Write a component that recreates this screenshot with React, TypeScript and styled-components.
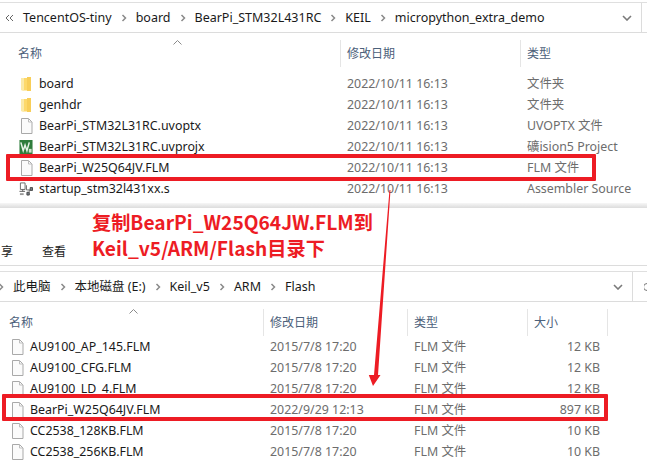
import React from 'react';
import styled, {createGlobalStyle} from 'styled-components';

const GlobalStyle = createGlobalStyle`
  html, body {
    margin: 0;
    padding: 0;
    background: #fff;
  }
`;

const Page = styled.div`
  position: relative;
  width: 647px;
  height: 463px;
  overflow: hidden;
  background: #fff;
  color: #1a1a1a;
  font-family: "Noto Sans", "Noto Sans CJK SC", sans-serif;
  font-size: 12px;
  line-height: 16px;
`;

const TopWindow = styled.section`
  height: 203px;
  padding-top: 2px;
  box-sizing: border-box;
`;

const WindowGap = styled.div`
  height: 5px;
  background: linear-gradient(#f7f7f7, #dcdcdc);
`;

const BottomWindow = styled.section`
  height: 255px;
`;

const AddressBar = styled.div`
  display: flex;
  align-items: center;
  height: 29px;
  border-top: 1px solid #dfdfdf;
  border-bottom: 1px solid #dcdcdc;
  white-space: nowrap;
`;

const Crumbs = styled.div<{$left: number}>`
  flex: 1;
  display: flex;
  align-items: center;
  gap: 9px;
  margin-left: ${p => p.$left}px;
  overflow: hidden;
`;

const Crumb = styled.span`
  font-size: 12.5px;
`;

const DropBox = styled.div`
  display: flex;
  align-items: center;
  justify-content: center;
  align-self: stretch;
  width: 29px;
  border-right: 1px solid #dcdcdc;
`;

const RefreshSlot = styled.div<{$width: number}>`
  display: flex;
  justify-content: flex-end;
  width: ${p => p.$width}px;
  overflow: hidden;
`;

const HeaderRow = styled.div<{$cols: string}>`
  position: relative;
  display: grid;
  grid-template-columns: ${p => p.$cols};
  height: 34px;
  align-items: end;
`;

const HeaderCell = styled.div<{$pad?: number; $line?: boolean}>`
  height: 27px;
  padding-left: ${p => p.$pad ?? 6}px;
  border-left: ${p => (p.$line ? '1px solid #e5e5e5' : 'none')};
  color: #4c607a;
  font-size: 12px;
  line-height: 27px;
  box-sizing: border-box;
`;

const SortCaret = styled.svg<{$x: number}>`
  position: absolute;
  left: ${p => p.$x}px;
  top: 7px;
`;

const FileList = styled.div<{$pad: number}>`
  padding-top: ${p => p.$pad}px;
`;

const Row = styled.div<{$cols: string}>`
  display: grid;
  grid-template-columns: ${p => p.$cols};
  height: 21px;
  align-items: center;
  white-space: nowrap;
`;

const NameCell = styled.div<{$pad: number}>`
  display: flex;
  align-items: center;
  gap: 6px;
  padding-left: ${p => p.$pad}px;
`;

const IconBox = styled.span`
  display: flex;
  width: 13px;
  height: 16px;
  flex: none;
`;

const FileName = styled.span`
  font-size: 12.4px;
`;

const InfoCell = styled.div<{$right?: boolean}>`
  color: #6d6d6d;
  font-size: 12.4px;
  text-align: ${p => (p.$right ? 'right' : 'left')};
  padding-left: ${p => (p.$right ? 0 : 7)}px;
  padding-right: ${p => (p.$right ? 7 : 0)}px;
`;

const Ribbon = styled.div`
  height: 57px;
  border-bottom: 1px solid #dcdcdc;
  display: flex;
  flex-direction: column;
`;

const RibbonHead = styled.div`
  height: 24px;
  padding-top: 8px;
  margin-left: -8px;
  font-size: 12px;
`;

const RibbonTabs = styled.div`
  display: flex;
  gap: 29px;
  margin-top: 4px;
  margin-left: 1px;
  font-size: 12px;
`;

const RibbonGap = styled.div`
  height: 5px;
`;

const Annotation = styled.div`
  position: absolute;
  left: 92px;
  top: 209px;
  color: #ed1c24;
  font-family: "Noto Sans CJK SC", "Noto Sans", sans-serif;
  font-size: 19.2px;
  font-weight: 700;
  line-height: 26px;
  white-space: nowrap;
`;

const Highlight = styled.div<{$x: number; $y: number; $w: number; $h: number}>`
  position: absolute;
  left: ${p => p.$x}px;
  top: ${p => p.$y}px;
  width: ${p => p.$w}px;
  height: ${p => p.$h}px;
  border: 4px solid #ed1c24;
  border-radius: 1px;
  box-sizing: border-box;
`;

const ArrowLayer = styled.svg`
  position: absolute;
  left: 0;
  top: 0;
  pointer-events: none;
`;

const FileIcon = () => (
  <svg width="13" height="16" viewBox="0 0 13 16">
    <path d="M1.500.5h7l3.500 3.500v11.500H1.500z" fill="#fbfbfb" stroke="#a9a9a9" />
    <path d="M8.500.5v3.500H12" fill="none" stroke="#bdbdbd" />
  </svg>
);

const FolderIcon = () => (
  <svg width="13" height="16" viewBox="0 0 13 16">
    <path d="M1 2h9v12.500H3L1 14z" fill="#fdd96b" />
    <path d="M1 2h3v12.500L1 14z" fill="#fbeaa8" />
    <path d="M7 1h4v14H7z" fill="#f8ce58" />
  </svg>
);

const ProjectIcon = () => (
  <svg width="15" height="16" viewBox="0 0 15 16" style={{marginLeft: -1}}>
    <rect x="0.5" y="0.5" width="14" height="15" fill="#2f7d3c" />
    <path d="M2 3l2.500 9L6.500 6l2 6L11 3" fill="none" stroke="#e8f3e8" strokeWidth="1.600" />
    <path d="M10.500 10h3v4h-3z" fill="#cfe6cf" />
  </svg>
);

const SourceIcon = () => (
  <svg width="15" height="16" viewBox="0 0 15 16" style={{marginLeft: -1}}>
    <path d="M1.500 1.500h5v7h-5z" fill="#fff" stroke="#666" />
    <path d="M.5 10.500h6M4 8.500v2" fill="none" stroke="#555" />
    <path d="M8 4v5M8 9h5M11 9v2" fill="none" stroke="#666" />
    <path d="M8.500 11.500h2.500v3h-2.500zM12 6.500h2.500v3H12z" fill="#77808a" stroke="#444" />
    <path d="M1 12.500h4v2H1z" fill="#999" />
  </svg>
);

const Chevron = () => (
  <svg width="6" height="8" viewBox="0 0 6 8">
    <path d="M1.500 1l3 3-3 3" fill="none" stroke="#8a8a8a" strokeWidth="1.500" />
  </svg>
);

const DoubleChevron = () => (
  <svg width="9" height="8" viewBox="0 0 9 8">
    <path d="M4 1L1 4l3 3M8 1L5 4l3 3" fill="none" stroke="#666" />
  </svg>
);

const DropChevron = () => (
  <svg width="10" height="6" viewBox="0 0 10 6">
    <path d="M1 1l4 4 4-4" fill="none" stroke="#7a7a7a" strokeWidth="1.600" />
  </svg>
);

// only the left edge of the refresh arrow is inside the frame
const RefreshEdge = () => (
  <svg width="3" height="10" viewBox="0 0 3 10">
    <path d="M3 1.500a3.500 3.500 0 0 0 0 7" fill="none" stroke="#777" />
  </svg>
);

const Caret = ({x}: {x: number}) => (
  <SortCaret $x={x} width="9" height="5" viewBox="0 0 9 5">
    <path d="M.5 4.500l4-4 4 4" fill="none" stroke="#8a8a8a" />
  </SortCaret>
);

type IconKind = 'file' | 'folder' | 'project' | 'source';

const icons: {[key in IconKind]: React.FC} = {
  file: FileIcon,
  folder: FolderIcon,
  project: ProjectIcon,
  source: SourceIcon,
};

const TOP_COLS = '340px 180px 127px';
const BOTTOM_COLS = '263px 144px 120px 80px 40px';
const TOP_TIME = '2022/10/11 16:13';
const OLD_TIME = '2015/7/8 17:20';

const topRows: {name: string; icon: IconKind; kind: string}[] = [
  {name: 'board', icon: 'folder', kind: '文件夹'},
  {name: 'genhdr', icon: 'folder', kind: '文件夹'},
  {name: 'BearPi_STM32L31RC.uvoptx', icon: 'file', kind: 'UVOPTX 文件'},
  {name: 'BearPi_STM32L31RC.uvprojx', icon: 'project', kind: '礦ision5 Project'},
  {name: 'BearPi_W25Q64JV.FLM', icon: 'file', kind: 'FLM 文件'},
  {name: 'startup_stm32l431xx.s', icon: 'source', kind: 'Assembler Source'},
];

const bottomRows: {name: string; time: string; size: string}[] = [
  {name: 'AU9100_AP_145.FLM', time: OLD_TIME, size: '12 KB'},
  {name: 'AU9100_CFG.FLM', time: OLD_TIME, size: '12 KB'},
  {name: 'AU9100_LD_4.FLM', time: OLD_TIME, size: '12 KB'},
  {name: 'BearPi_W25Q64JV.FLM', time: '2022/9/29 12:13', size: '897 KB'},
  {name: 'CC2538_128KB.FLM', time: OLD_TIME, size: '10 KB'},
  {name: 'CC2538_256KB.FLM', time: OLD_TIME, size: '10 KB'},
];

const topCrumbs = ['TencentOS-tiny', 'board', 'BearPi_STM32L431RC', 'KEIL', 'micropython_extra_demo'];
const bottomCrumbs = ['此电脑', '本地磁盘 (E:)', 'Keil_v5', 'ARM', 'Flash'];

const App: React.FC = () => (
  <Page>
    <GlobalStyle />

    <TopWindow>
      <AddressBar>
        <Crumbs $left={5}>
          <DoubleChevron />
          {topCrumbs.map((crumb, i) => (
            <React.Fragment key={crumb}>
              {i > 0 && <Chevron />}
              <Crumb>{crumb}</Crumb>
            </React.Fragment>
          ))}
        </Crumbs>
        <DropBox>
          <DropChevron />
        </DropBox>
        <RefreshSlot $width={5} />
      </AddressBar>
      <HeaderRow $cols={TOP_COLS}>
        <HeaderCell $pad={18}>名称</HeaderCell>
        <HeaderCell $line>修改日期</HeaderCell>
        <HeaderCell $line>类型</HeaderCell>
        <Caret x={173} />
      </HeaderRow>
      <FileList $pad={6}>
        {topRows.map(row => {
          const Icon = icons[row.icon];
          return (
            <Row key={row.name} $cols={TOP_COLS}>
              <NameCell $pad={20}>
                <IconBox><Icon /></IconBox>
                <FileName>{row.name}</FileName>
              </NameCell>
              <InfoCell>{TOP_TIME}</InfoCell>
              <InfoCell>{row.kind}</InfoCell>
            </Row>
          );
        })}
      </FileList>
    </TopWindow>

    <WindowGap />

    <BottomWindow>
      <Ribbon>
        <RibbonHead>h</RibbonHead>
        <RibbonTabs>
          <span>享</span>
          <span>查看</span>
        </RibbonTabs>
      </Ribbon>
      <RibbonGap />
      <AddressBar>
        <Crumbs $left={-2}>
          <Chevron />
          {bottomCrumbs.map((crumb, i) => (
            <React.Fragment key={crumb}>
              {i > 0 && <Chevron />}
              <Crumb>{crumb}</Crumb>
            </React.Fragment>
          ))}
        </Crumbs>
        <DropBox>
          <DropChevron />
        </DropBox>
        <RefreshSlot $width={14}>
          <RefreshEdge />
        </RefreshSlot>
      </AddressBar>
      <HeaderRow $cols={BOTTOM_COLS}>
        <HeaderCell $pad={9}>名称</HeaderCell>
        <HeaderCell $line>修改日期</HeaderCell>
        <HeaderCell $line>类型</HeaderCell>
        <HeaderCell $line>大小</HeaderCell>
        <HeaderCell $line />
        <Caret x={129} />
      </HeaderRow>
      <FileList $pad={0}>
        {bottomRows.map(row => (
          <Row key={row.name} $cols={BOTTOM_COLS}>
            <NameCell $pad={11}>
              <IconBox><FileIcon /></IconBox>
              <FileName>{row.name}</FileName>
            </NameCell>
            <InfoCell>{row.time}</InfoCell>
            <InfoCell>FLM 文件</InfoCell>
            <InfoCell $right>{row.size}</InfoCell>
          </Row>
        ))}
      </FileList>
    </BottomWindow>

    <Annotation>
      复制BearPi_W25Q64JW.FLM到<br />
      Keil_v5/ARM/Flash目录下
    </Annotation>

    <Highlight $x={6} $y={154} $w={590} $h={27} />
    <Highlight $x={2} $y={394} $w={606} $h={27} />

    <ArrowLayer width="647" height="463" viewBox="0 0 647 463">
      <path d="M389.500 190L390.500 190L378 375L380.500 375L373 386L368.800 375L374 375z" fill="#ed1c24" />
    </ArrowLayer>
  </Page>
);

export default App;
